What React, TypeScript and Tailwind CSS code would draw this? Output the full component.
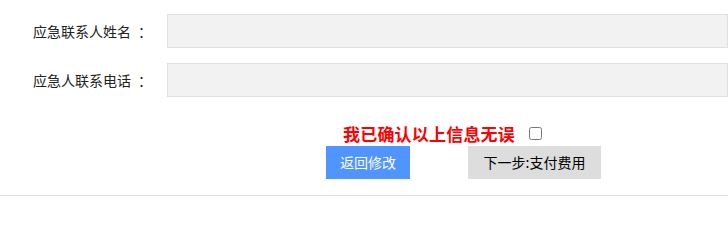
const font = { fontFamily: '"Noto Sans CJK SC", "Liberation Sans", sans-serif' };

const Field = ({ label, className }: { label: string; className?: string }) => (
  <div className={`flex items-center h-[34px] ${className ?? ""}`}>
    <label className="w-[167px] pl-[33px] flex text-[14px] text-[#222] leading-none">
      <span>{label}</span>
      <span className="ml-[7px]">：</span>
    </label>
    <input
      type="text"
      className="w-[562px] h-[34px] bg-[#f2f2f2] border border-[#e0e0e0] outline-none"
    />
  </div>
);

export default function App() {
  return (
    <div className="w-[728px] h-[224px] bg-white overflow-hidden" style={font}>
      <div className="pt-[14px]">
        <Field label="应急联系人姓名" />
        <Field label="应急人联系电话" className="mt-[15px]" />
      </div>
      <div className="flex items-center h-[18px] mt-[27px] pl-[343px]">
        <span className="text-[17px] font-bold text-[#ff0000] leading-none tracking-[0.2px]">
          我已确认以上信息无误
        </span>
        <input type="checkbox" className="ml-[14px] w-[13px] h-[13px]" />
      </div>
      <div className="flex mt-[4px] pl-[326px] gap-[58px]">
        <button className="w-[84px] h-[33px] bg-[#5094ff] text-white text-[14px]">
          返回修改
        </button>
        <button className="w-[133px] h-[33px] bg-[#dddddd] text-black text-[14px]">
          下一步:支付费用
        </button>
      </div>
      <div className="mt-[16px] border-t border-[#dddddd]" />
    </div>
  );
}
